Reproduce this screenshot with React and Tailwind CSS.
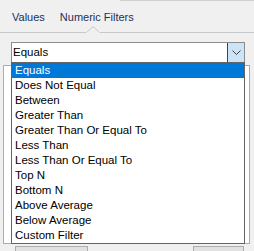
import React from "react";

const items = [
  "Equals",
  "Does Not Equal",
  "Between",
  "Greater Than",
  "Greater Than Or Equal To",
  "Less Than",
  "Less Than Or Equal To",
  "Top N",
  "Bottom N",
  "Above Average",
  "Below Average",
  "Custom Filter",
];

export default function App() {
  return (
    <div
      className="relative w-[254px] h-[251px] overflow-hidden bg-[#f0f0f0] text-[11px] leading-[15px] text-black"
      style={{ fontFamily: '"Liberation Sans", Arial, sans-serif' }}
    >
      <div className="h-px bg-[#cfcfcf] ml-[120px]" />
      {/* tabs */}
      <div className="flex h-[31px] items-center pl-[12px] gap-[15px] text-[#1e2f5a] pt-[2px]">
        <span>Values</span>
        <span>Numeric Filters</span>
      </div>
      <div className="relative h-px bg-[#c8c8c8]">
        <svg className="absolute left-[86px] top-[-6px]" width="14" height="7" viewBox="0 0 14 7">
          <rect x="0" y="6" width="14" height="1" fill="#f0f0f0" />
          <path d="M0.5 6.5 L7 0.5 L13.5 6.5" fill="none" stroke="#c8c8c8" strokeWidth="1" />
        </svg>
      </div>
      {/* combo */}
      <div className="mt-[9px] ml-[11px] w-[234px] h-[21px] flex border border-[#8c8c8c] bg-white">
        <div className="flex-1 pl-[1px] flex items-center text-[11.5px]">Equals</div>
        <div className="w-[17px] h-full bg-[#cce4f7] border-l border-[#005499] flex items-center justify-center">
          <svg width="9" height="5" viewBox="0 0 9 5">
            <path d="M0.5 0.5 L4.5 4.5 L8.5 0.5" fill="none" stroke="#404040" strokeWidth="1" />
          </svg>
        </div>
      </div>
      {/* panel behind */}
      <div className="ml-[3px] mr-[4px] mt-[2px] h-[179px] bg-white border border-[#acacac]" />
      <div className="flex justify-between mt-[2px] pl-[15px] pr-[10px]">
        <div className="w-[73px] h-[22px] border border-[#adadad] bg-[#e1e1e1] flex items-start justify-center pt-[3px]">Clear Filter</div>
        <div className="w-[51px] h-[22px] border border-[#adadad] bg-[#e1e1e1] flex items-start justify-center pt-[3px]">Close</div>
      </div>
      {/* dropdown list */}
      <div className="absolute left-[11px] top-[62px] w-[234px] border border-[#646464] bg-white text-[11.5px]">
        {items.map((t, i) => (
          <div
            key={t}
            className={
              i === 0
                ? "h-[15px] pl-[3px] bg-[#0078d7] text-white whitespace-nowrap"
                : "h-[15px] pl-[3px] whitespace-nowrap"
            }
          >
            {t}
          </div>
        ))}
      </div>
    </div>
  );
}
